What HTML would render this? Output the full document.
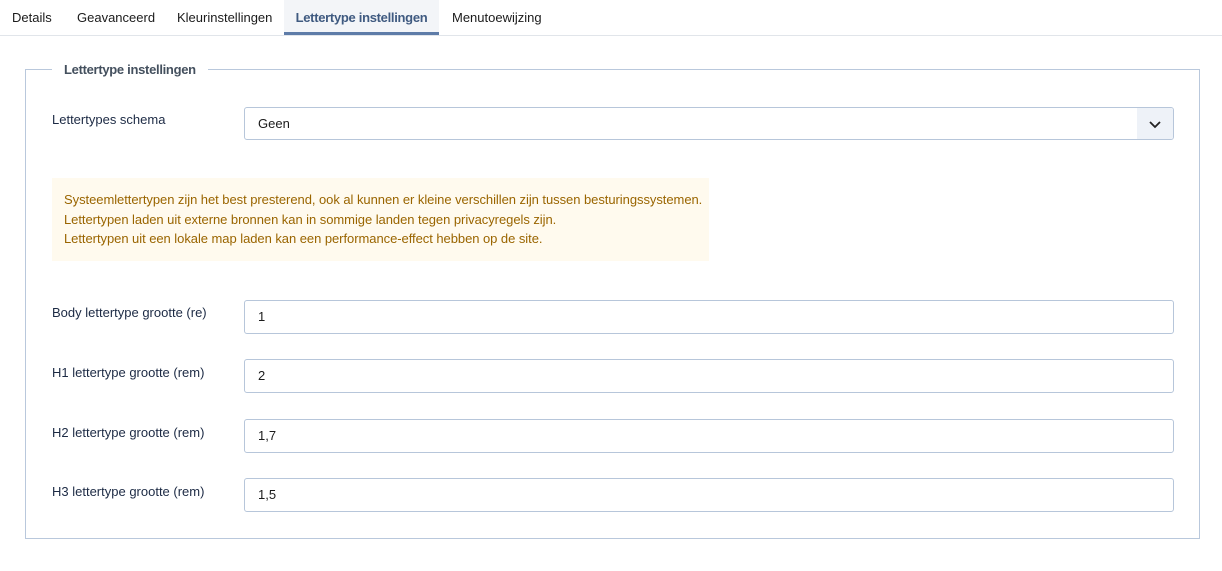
<!DOCTYPE html>
<html><head><meta charset="utf-8"><style>
*{box-sizing:border-box;margin:0;padding:0}
body{width:1222px;height:571px;background:#fff;font-family:"Liberation Sans",sans-serif;font-size:13px;color:#1b2533;position:relative;overflow:hidden}
.tabs{position:absolute;left:0;top:0;width:1222px;height:36px;border-bottom:1px solid #e1e5ea}
.tab{position:absolute;top:0;height:35px;line-height:36px;font-size:13px;color:#1b1b1b;white-space:nowrap}
.tab.act{background:#f3f5f8;color:#3f5a80;font-weight:bold;border-bottom:3px solid #5e7ca8;text-align:center;line-height:36px;letter-spacing:-0.3px}
.fs{position:absolute;left:25px;top:69px;width:1175px;height:470px;border:1px solid #b9c8dc}
.legend{position:absolute;left:52px;top:61px;background:#fff;padding:0 12px;font-weight:bold;color:#44505e;font-size:13px;line-height:17px;letter-spacing:-0.3px}
.lbl{position:absolute;left:52px;font-size:13px;color:#1c2a44}
.inp{position:absolute;left:244px;width:930px;height:34px;border:1px solid #b7c6da;border-radius:3px;padding-left:13px;line-height:32px;font-size:13px;color:#1b1b1b;overflow:hidden}
.chev{position:absolute;right:0;top:0;width:36px;height:32px;background:#eef2f8}
.alert{position:absolute;left:52px;top:178px;width:657px;height:83px;background:#fffaee;color:#9a6500;font-size:13px;line-height:19.5px;padding:12px 0 0 12px;white-space:nowrap;letter-spacing:-0.05px}
</style></head><body>
<div class="tabs">
<div class="tab" style="left:12px">Details</div>
<div class="tab" style="left:77px">Geavanceerd</div>
<div class="tab" style="left:177px">Kleurinstellingen</div>
<div class="tab act" style="left:284px;width:155px">Lettertype instellingen</div>
<div class="tab" style="left:452px">Menutoewijzing</div>
</div>
<div class="fs"></div>
<div class="legend">Lettertype instellingen</div>
<div class="lbl" style="top:112px">Lettertypes schema</div>
<div class="inp" style="top:107px;height:33px">Geen<div class="chev"><svg width="36" height="32" viewBox="0 0 36 32"><path d="M13 14l5 5 5-5" fill="none" stroke="#222" stroke-width="1.8"/></svg></div></div>
<div class="alert">Systeemlettertypen zijn het best presterend, ook al kunnen er kleine verschillen zijn tussen besturingssystemen.<br>Lettertypen laden uit externe bronnen kan in sommige landen tegen privacyregels zijn.<br>Lettertypen uit een lokale map laden kan een performance-effect hebben op de site.</div>
<div class="lbl" style="top:305px">Body lettertype grootte (re)</div>
<div class="inp" style="top:300px">1</div>
<div class="lbl" style="top:365px">H1 lettertype grootte (rem)</div>
<div class="inp" style="top:359px">2</div>
<div class="lbl" style="top:425px">H2 lettertype grootte (rem)</div>
<div class="inp" style="top:419px">1,7</div>
<div class="lbl" style="top:484px">H3 lettertype grootte (rem)</div>
<div class="inp" style="top:478px">1,5</div>
</body></html>
